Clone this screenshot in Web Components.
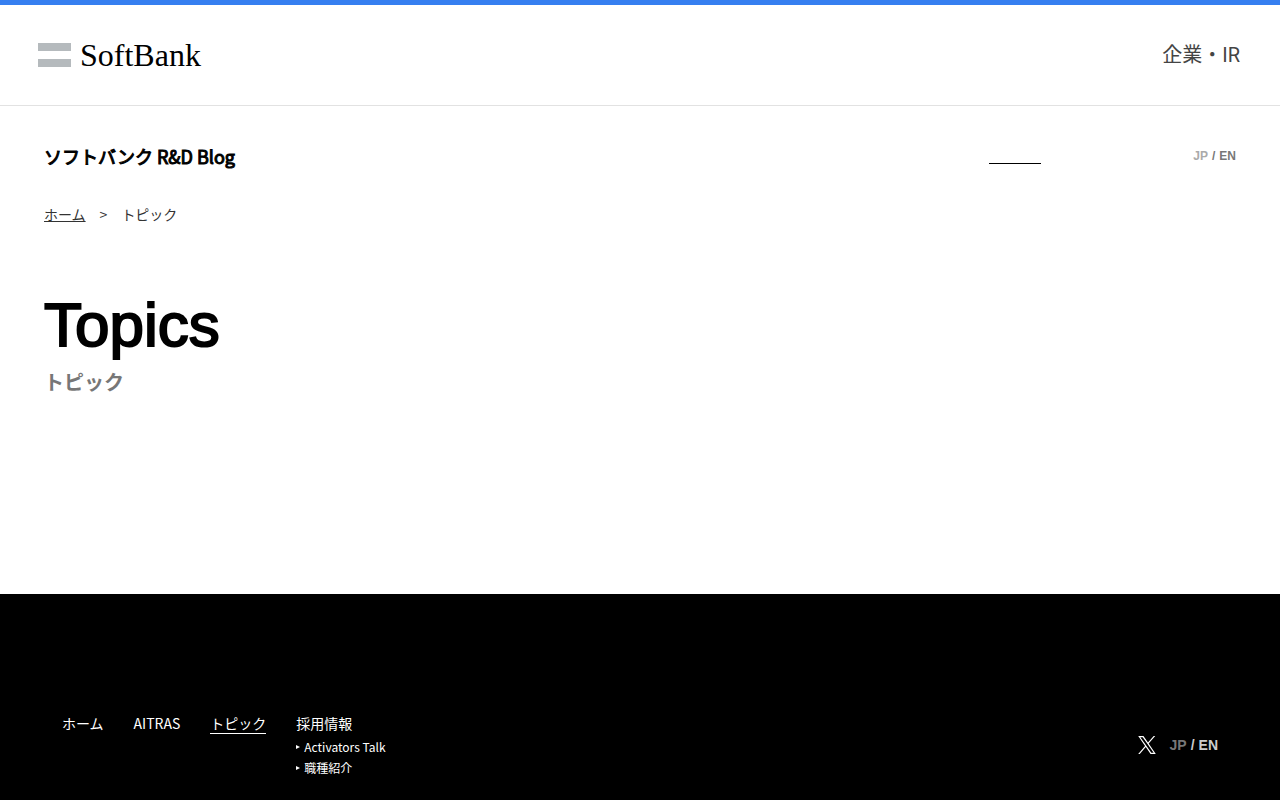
<!DOCTYPE html>
<html lang="ja">
<head>
<meta charset="utf-8">
<meta name="viewport" content="width=device-width, initial-scale=1">
<title>Topics | ソフトバンク R&amp;D Blog</title>
<style>
body { margin: 0; background: #fff; color: #000; font-family: "Noto Sans CJK JP", sans-serif; }
</style>
</head>
<body>
<rd-page>
  <sb-header slot="top"></sb-header>
  <blog-header>ソフトバンク R&amp;D Blog</blog-header>
  <bread-crumb>トピック</bread-crumb>
  <page-title heading="Topics">トピック</page-title>
  <blog-footer slot="bottom"></blog-footer>
</rd-page>

<template id="rd-page">
  <style>
    :host { display: flex; flex-direction: column; min-height: 100vh; box-sizing: border-box; border-top: 5px solid #367ff0; }
    main { padding: 36px 44px 197px; }
  </style>
  <slot name="top"></slot>
  <main><slot></slot></main>
  <slot name="bottom"></slot>
</template>

<template id="sb-header">
  <style>
    :host { display: flex; align-items: center; justify-content: space-between; height: 100px; padding: 0 40px 0 38px; border-bottom: 1px solid #e2e2e2; }
    a { color: #444; text-decoration: none; }
    .logo { display: flex; align-items: center; gap: 9px; color: #000; font: 32px/40px "Liberation Serif", serif; }
    svg { display: block; }
    .ir { font: 400 20px/30px Roboto, "Noto Sans CJK JP", sans-serif; }
  </style>
  <a class="logo" href="#"><svg width="33" height="24" viewBox="0 0 33 24" fill="#b5babd" aria-hidden="true"><path d="M0 0h33v8H0zM0 16h33v8H0z"/></svg><span>SoftBank</span></a>
  <a class="ir" href="#">企業・IR</a>
</template>

<template id="blog-header">
  <style>
    :host { display: flex; align-items: center; height: 28px; }
    .name { flex: 1; color: #000; text-decoration: none; font-size: 18px; font-weight: 400; line-height: 28px; -webkit-text-stroke: 1px #000; }
    .current { width: 52px; height: 14px; margin-right: 152px; border-bottom: 1px solid #000; }
  </style>
  <a class="name" href="#"><slot></slot></a>
  <a class="current" href="#" aria-label="トピック"></a>
  <lang-switch></lang-switch>
</template>

<template id="lang-switch">
  <style>
    :host { display: flex; gap: 4px; color: #777; font: 700 12px/18px "Liberation Sans", sans-serif; }
    :host([size="large"]) { color: #ccc; font-size: 14px; }
    a { color: inherit; text-decoration: none; }
    .jp { color: #aaa; }
    :host([size="large"]) .jp { color: #777; }
  </style>
  <a class="jp" href="#">JP</a><span>/</span><a class="en" href="#">EN</a>
</template>

<template id="bread-crumb">
  <style>
    :host { display: block; margin-top: 34px; color: #333; font-size: 14px; line-height: 20px; }
    nav { display: flex; gap: 14px; }
    a { color: inherit; text-underline-offset: 1px; }
  </style>
  <nav aria-label="パンくず"><a href="#">ホーム</a><span>&gt;</span><span><slot></slot></span></nav>
</template>

<template id="page-title">
  <style>
    :host { display: block; margin-top: 65px; }
    h1 { margin: 0; font: 400 62px/72px "Liberation Sans", sans-serif; -webkit-text-stroke: 2px #000; }
    p { margin: 6px 0 0; color: #777; font-size: 20px; font-weight: 700; line-height: 30px; }
  </style>
  <h1></h1>
  <p><slot></slot></p>
</template>

<template id="blog-footer">
  <style>
    :host { display: flex; flex: 1; align-items: flex-start; justify-content: space-between; padding: 119px 62px 20px; background: #000; color: #fff; }
    a { color: inherit; text-decoration: none; }
    nav { display: flex; align-items: flex-start; gap: 30px; font-size: 14px; line-height: 20px; }
    nav > a { border-bottom: 1px solid transparent; }
    nav > .on { border-color: #fff; }
    ul { list-style: none; margin: 3px 0 0; padding: 0; font-size: 12px; line-height: 21px; }
    li a { display: flex; align-items: center; gap: 4px; }
    svg { display: block; }
    .tools { display: flex; align-items: center; gap: 14px; margin-top: 23px; }
  </style>
  <nav aria-label="フッター">
    <a href="#">ホーム</a>
    <a href="#">AITRAS</a>
    <a class="on" href="#">トピック</a>
    <div>
      <a href="#">採用情報</a>
      <ul>
        <li><a href="#"><svg width="4" height="4" viewBox="0 0 4 4" fill="#fff" aria-hidden="true"><path d="M0 0l4 2-4 2z"/></svg>Activators Talk</a></li>
        <li><a href="#"><svg width="4" height="4" viewBox="0 0 4 4" fill="#fff" aria-hidden="true"><path d="M0 0l4 2-4 2z"/></svg>職種紹介</a></li>
      </ul>
    </div>
  </nav>
  <div class="tools">
    <a href="#" aria-label="X"><svg width="18" height="18" viewBox="0 0 1200 1227" fill="#fff"><path d="M714 519 1161 0h-106L667 451 357 0H0l468 682L0 1226h106l409-476 327 476h358L714 519ZM569 688l-47-68L144 80h163l304 435 48 68 396 566H892L569 688Z"/></svg></a>
    <lang-switch size="large"></lang-switch>
  </div>
</template>

<script>
class TemplateElement extends HTMLElement {
  constructor() {
    super();
    this.attachShadow({ mode: 'open' })
      .append(document.getElementById(this.localName).content.cloneNode(true));
  }
}
for (const name of ['rd-page', 'sb-header', 'blog-header', 'lang-switch', 'bread-crumb', 'blog-footer']) {
  customElements.define(name, class extends TemplateElement {});
}
customElements.define('page-title', class extends TemplateElement {
  connectedCallback() {
    this.shadowRoot.querySelector('h1').textContent = this.getAttribute('heading');
  }
});
</script>
</body>
</html>
